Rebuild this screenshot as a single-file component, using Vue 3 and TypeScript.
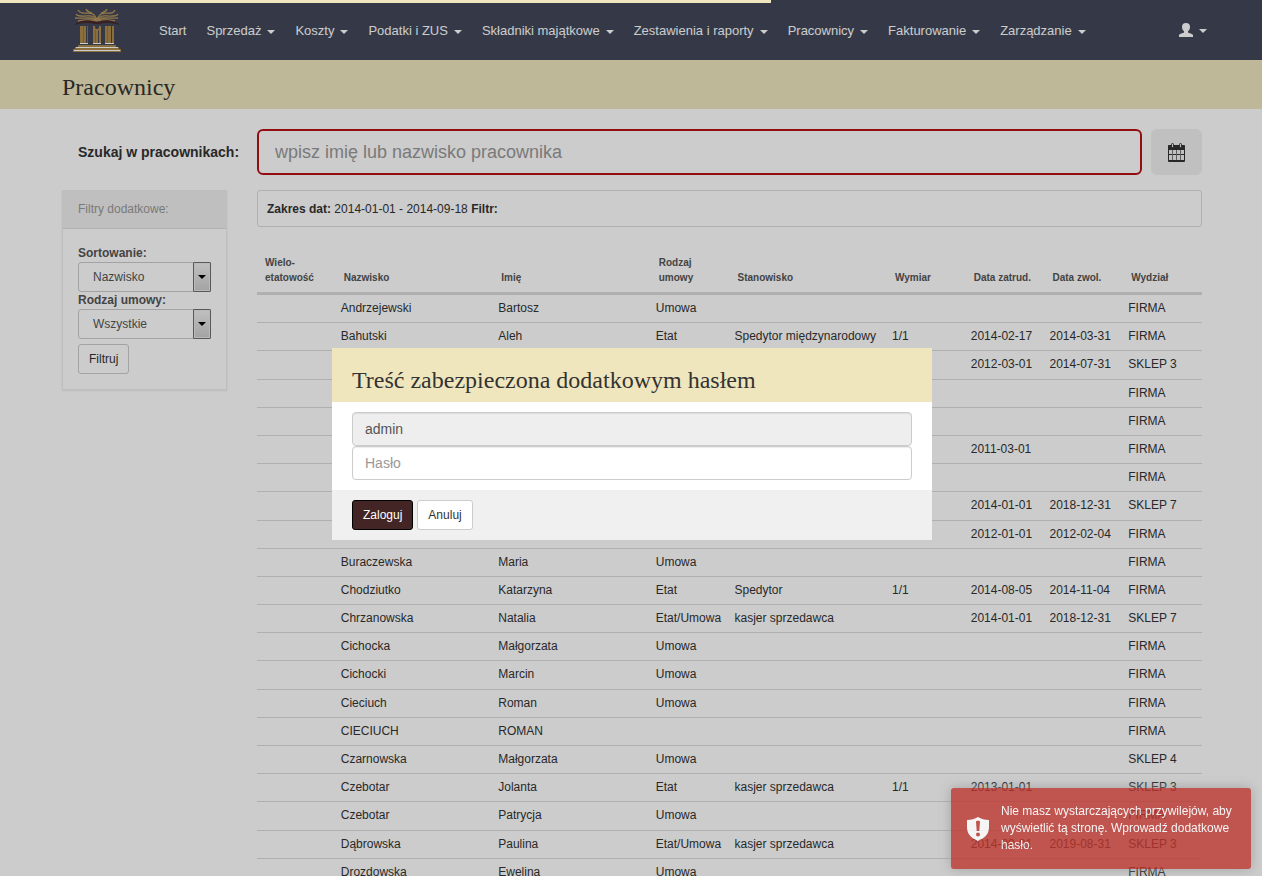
<script setup lang="ts">
import { ref } from 'vue'

interface NavItem {
  label: string
  menu: boolean
}

interface Employee {
  surname: string
  name: string
  contract: string
  position: string
  share: string
  hired: string
  released: string
  department: string
}

const navItems: NavItem[] = [
  { label: 'Start', menu: false },
  { label: 'Sprzedaż', menu: true },
  { label: 'Koszty', menu: true },
  { label: 'Podatki i ZUS', menu: true },
  { label: 'Składniki majątkowe', menu: true },
  { label: 'Zestawienia i raporty', menu: true },
  { label: 'Pracownicy', menu: true },
  { label: 'Fakturowanie', menu: true },
  { label: 'Zarządzanie', menu: true },
]

const progress = ref(61.1)
const query = ref('')
const sorting = ref('Nazwisko')
const contractType = ref('Wszystkie')
const login = ref('admin')
const password = ref('')

function row(
  surname: string,
  name: string,
  contract: string,
  position: string,
  share: string,
  hired: string,
  released: string,
  department: string,
): Employee {
  return { surname, name, contract, position, share, hired, released, department }
}

const employees: Employee[] = [
  row('Andrzejewski', 'Bartosz', 'Umowa', '', '', '', '', 'FIRMA'),
  row('Bahutski', 'Aleh', 'Etat', 'Spedytor międzynarodowy', '1/1', '2014-02-17', '2014-03-31', 'FIRMA'),
  row('', '', '', '', '', '2012-03-01', '2014-07-31', 'SKLEP 3'),
  row('', '', '', '', '', '', '', 'FIRMA'),
  row('', '', '', '', '', '', '', 'FIRMA'),
  row('', '', '', '', '', '2011-03-01', '', 'FIRMA'),
  row('', '', '', '', '', '', '', 'FIRMA'),
  row('', '', '', '', '', '2014-01-01', '2018-12-31', 'SKLEP 7'),
  row('', '', '', '', '', '2012-01-01', '2012-02-04', 'FIRMA'),
  row('Buraczewska', 'Maria', 'Umowa', '', '', '', '', 'FIRMA'),
  row('Chodziutko', 'Katarzyna', 'Etat', 'Spedytor', '1/1', '2014-08-05', '2014-11-04', 'FIRMA'),
  row('Chrzanowska', 'Natalia', 'Etat/Umowa', 'kasjer sprzedawca', '', '2014-01-01', '2018-12-31', 'SKLEP 7'),
  row('Cichocka', 'Małgorzata', 'Umowa', '', '', '', '', 'FIRMA'),
  row('Cichocki', 'Marcin', 'Umowa', '', '', '', '', 'FIRMA'),
  row('Cieciuch', 'Roman', 'Umowa', '', '', '', '', 'FIRMA'),
  row('CIECIUCH', 'ROMAN', '', '', '', '', '', 'FIRMA'),
  row('Czarnowska', 'Małgorzata', 'Umowa', '', '', '', '', 'SKLEP 4'),
  row('Czebotar', 'Jolanta', 'Etat', 'kasjer sprzedawca', '1/1', '2013-01-01', '', 'SKLEP 3'),
  row('Czebotar', 'Patrycja', 'Umowa', '', '', '', '', 'FIRMA'),
  row('Dąbrowska', 'Paulina', 'Etat/Umowa', 'kasjer sprzedawca', '', '2014-09-01', '2019-08-31', 'SKLEP 3'),
  row('Drozdowska', 'Ewelina', 'Umowa', '', '', '', '', 'FIRMA'),
]
</script>

<template>
  <div class="page">
    <header class="topbar">
      <div class="container topbar-inner">
        <a href="#" class="brand" aria-label="Strona główna">
          <svg width="50" height="44" viewBox="0 0 50 44" aria-hidden="true">
            <g fill="none" stroke="#b8975c" stroke-width="1.3">
              <path d="M25 12 C21 2 16 6 10 5 Q7 4 6 2" />
              <path d="M25 12 C20 5 15 9 9 8 Q5 8 4 6" />
              <path d="M25 13 C20 8 14 11 3 10" />
              <path d="M24 13 C18 11 12 12 6 13" />
              <path d="M20 5 C17 4 15 4 14 1" />
              <path d="M25 12 C29 2 34 6 40 5 Q42 4 43 2" />
              <path d="M25 12 C30 5 35 9 41 8 Q45 8 46 6" />
              <path d="M25 13 C30 8 36 11 46 10" />
              <path d="M26 13 C32 11 38 12 43 13" />
              <path d="M29 5 C32 4 34 4 35 1" />
            </g>
            <path d="M3 16 C11 11 19 12 24 14 H26 C31 12 39 11 47 16 V17 C39 14 31 15 27 16 H23 C19 15 11 14 3 17Z" fill="#49262a" />
            <g fill="#ad8a4c">
              <path d="M8 18h3v18H8z M12 18h2v18h-2z M21 18h2v18h-2z M24 21h2v15h-2z M27 18h2v18h-2z M33 18h2v18h-2z M36 18h3v18h-3z M40 18h2v18h-2z" />
              <path d="M21 18 L25 22 L29 18 V20 L26 23 H24 L21 20Z" />
              <path d="M6 37h38v2H6z M3 39h44v2H3z M1 41h48v3H1z" />
            </g>
            <g fill="#7d7672">
              <path d="M15 18h1v17h-1z M11 18h1v17h-1z M35 18h1v17h-1z M23 22h1v13h-1z" />
            </g>
            <path d="M8 35h8v1H8z M21 35h8v1h-8z M33 35h9v1h-9z M4 39h42v1H4z M2 42h46v1H2z" fill="#fff" />
          </svg>
        </a>
        <nav class="nav">
          <a v-for="item in navItems" :key="item.label" href="#" class="nav-link">
            {{ item.label }}<span v-if="item.menu" class="caret"></span>
          </a>
        </nav>
        <button type="button" class="user" aria-label="Konto">
          <svg width="14" height="14" viewBox="0 0 14 14" aria-hidden="true">
            <path
              d="M7 0 C9.800 0 11 1.500 11 4 C11 6 10.200 7.500 9 8.300 V9.500 C9.800 10.300 14 10.600 14 12.300 V14 H0 V12.300 C0 10.600 4.200 10.300 5 9.500 V8.300 C3.800 7.500 3 6 3 4 C3 1.500 4.200 0 7 0Z"
              fill="#fff"
            />
          </svg>
          <span class="caret"></span>
        </button>
      </div>
    </header>

    <div class="title-band">
      <div class="container">
        <h1>Pracownicy</h1>
      </div>
    </div>

    <main class="container">
      <div class="search-row">
        <label for="search">Szukaj w pracownikach:</label>
        <input id="search" v-model="query" type="text" placeholder="wpisz imię lub nazwisko pracownika" />
        <button type="button" class="calendar" aria-label="Zakres dat">
          <svg width="17" height="19" viewBox="0 0 17 19" aria-hidden="true">
            <rect x="0.500" y="2.500" width="16" height="15.500" rx="1" fill="none" stroke="#333" />
            <path d="M0 3q0-1 1-1h15q1 0 1 1v4H0z M0 17h17v1q0 1-1 1H1q-1 0-1-1z M0 11h17v1H0z" fill="#333" />
            <path d="M4.500 7v10M8.500 7v10M12.500 7v10" stroke="#777" fill="none" />
            <rect x="3.500" y="0.500" width="2" height="4" rx="1" fill="#eee" stroke="#333" />
            <rect x="11.500" y="0.500" width="2" height="4" rx="1" fill="#eee" stroke="#333" />
          </svg>
        </button>
      </div>

      <div class="columns">
        <aside class="panel">
          <h2>Filtry dodatkowe:</h2>
          <form class="filters" @submit.prevent>
            <label for="sorting">Sortowanie:</label>
            <div class="select">
              <select id="sorting" v-model="sorting">
                <option>Nazwisko</option>
              </select>
              <span class="select-arrow"></span>
            </div>
            <label for="contract">Rodzaj umowy:</label>
            <div class="select">
              <select id="contract" v-model="contractType">
                <option>Wszystkie</option>
              </select>
              <span class="select-arrow"></span>
            </div>
            <button type="submit" class="btn">Filtruj</button>
          </form>
        </aside>

        <section class="results">
          <p class="summary"><b>Zakres dat:</b> 2014-01-01 - 2014-09-18 <b>Filtr:</b></p>
          <table>
            <colgroup>
              <col class="narrow" />
              <col class="wide" />
              <col class="wide" />
              <col class="narrow" />
              <col class="wide" />
              <col class="narrow" />
              <col class="narrow" />
              <col class="narrow" />
              <col class="narrow" />
            </colgroup>
            <thead>
              <tr>
                <th>Wielo-<br />etatowość</th>
                <th>Nazwisko</th>
                <th>Imię</th>
                <th>Rodzaj<br />umowy</th>
                <th>Stanowisko</th>
                <th>Wymiar</th>
                <th>Data zatrud.</th>
                <th>Data zwol.</th>
                <th>Wydział</th>
              </tr>
            </thead>
            <tbody>
              <tr v-for="(e, i) in employees" :key="i">
                <td></td>
                <td>{{ e.surname }}</td>
                <td>{{ e.name }}</td>
                <td>{{ e.contract }}</td>
                <td>{{ e.position }}</td>
                <td>{{ e.share }}</td>
                <td>{{ e.hired }}</td>
                <td>{{ e.released }}</td>
                <td>{{ e.department }}</td>
              </tr>
            </tbody>
          </table>
        </section>
      </div>
    </main>

    <div class="overlay">
      <form class="modal" role="dialog" aria-labelledby="modal-title" @submit.prevent>
        <h2 id="modal-title">Treść zabezpieczona dodatkowym hasłem</h2>
        <div class="modal-body">
          <input v-model="login" type="text" readonly aria-label="Login" />
          <input v-model="password" type="password" placeholder="Hasło" aria-label="Hasło" />
        </div>
        <div class="modal-footer">
          <button type="submit" class="btn primary">Zaloguj</button>
          <button type="button" class="btn">Anuluj</button>
        </div>
      </form>
    </div>

    <div class="progress" :style="{ width: progress + '%' }"></div>

    <div class="toast" role="alert">
      <svg width="22" height="24" viewBox="0 0 22 24" aria-hidden="true">
        <path
          fill-rule="evenodd"
          d="M11 0 C8 2 4 3 0 3 V10 C0 17 4 21 11 24 C18 21 22 17 22 10 V3 C18 3 14 2 11 0Z M9 4.500 C9 3.500 13 3.500 13 4.500 L12.300 14 H9.700Z M11 15.500 A2 2 0 1 1 11 19.500 A2 2 0 1 1 11 15.500Z"
          fill="#fff"
        />
      </svg>
      <p>Nie masz wystarczających przywilejów, aby wyświetlić tą stronę. Wprowadź dodatkowe hasło.</p>
    </div>
  </div>
</template>

<style>
body {
  margin: 0;
}
</style>

<style scoped>
.page {
  height: 100vh;
  overflow: hidden;
  background: #fff;
  color: #333;
  font-family: "Liberation Sans", Arial, sans-serif;
  font-size: 13px;
}

.page *,
.page *::before {
  box-sizing: border-box;
}

input,
select,
button {
  font-family: inherit;
  font-size: 13px;
  margin: 0;
}

.container {
  max-width: 1262px;
  margin: 0 auto;
  padding: 0 60px 0 62px;
}

.topbar {
  background: #414759;
}

.topbar-inner {
  display: flex;
  align-items: center;
  height: 60px;
}

.brand {
  display: flex;
  margin: 0 27px 0 10px;
}

.nav {
  display: flex;
  flex: 1;
}

.nav-link {
  display: flex;
  align-items: center;
  padding: 2px 10px 0;
  line-height: 20px;
  color: #fff;
  text-decoration: none;
  white-space: nowrap;
}

.caret {
  border-top: 4px solid #fff;
  border-left: 4px solid transparent;
  border-right: 4px solid transparent;
  margin: 2px 0 0 6px;
}

.user {
  display: flex;
  align-items: center;
  padding: 0;
  margin-right: -5px;
  border: 0;
  background: none;
}

.title-band {
  background: #efe6be;
}

h1 {
  margin: 0;
  padding: 14px 0 9px;
  font: 24px/26px Georgia, "Liberation Serif", serif;
}

.search-row {
  display: flex;
  align-items: center;
  padding: 20px 0 15px;
}

.search-row label {
  width: 195px;
  padding-left: 16px;
  font-size: 14px;
  font-weight: bold;
  white-space: nowrap;
}

.search-row input {
  flex: 1;
  min-width: 0;
  height: 46px;
  padding: 1px 16px 0;
  border: 2px solid #b91116;
  border-radius: 6px;
  font-size: 18px;
  color: #555;
  background: #fff;
}

input::placeholder {
  color: #999;
  opacity: 1;
}

.calendar {
  display: flex;
  align-items: center;
  justify-content: center;
  width: 51px;
  height: 46px;
  margin-left: 9px;
  border: 0;
  border-radius: 6px;
  background: #f0f0f0;
}

.columns {
  display: flex;
  align-items: flex-start;
  gap: 30px;
}

.panel {
  width: 165px;
  flex: none;
  border: 1px solid #eee;
  box-shadow: 0 1px 2px rgba(0, 0, 0, 0.08);
}

.panel h2 {
  margin: 0;
  padding: 10px 15px;
  border-bottom: 1px solid #ddd;
  background: #efefef;
  color: #999;
  font-size: 12px;
  font-weight: normal;
  line-height: 17px;
}

.filters {
  padding: 16px 15px 15px;
}

.filters label {
  display: block;
  line-height: 17px;
  font-size: 12px;
  font-weight: bold;
  color: #555;
}

.select {
  position: relative;
  width: 133px;
  height: 30px;
}

.select select {
  appearance: none;
  width: 100%;
  height: 30px;
  padding: 0 20px 0 14px;
  border: 1px solid #ccc;
  border-radius: 3px;
  background: #fff;
  color: #555;
  font-size: 12px;
}

.select-arrow {
  position: absolute;
  top: 0;
  right: 0;
  display: flex;
  align-items: center;
  justify-content: center;
  width: 18px;
  height: 30px;
  border: 1px solid #707070;
  border-radius: 1px;
  background: linear-gradient(#f0f0f0, #ccc);
  box-shadow: inset 0 0 0 1px #e8e8e8;
  pointer-events: none;
}

.select-arrow::before {
  content: "";
  border-top: 4px solid #000;
  border-left: 4px solid transparent;
  border-right: 4px solid transparent;
}

.btn {
  height: 30px;
  padding: 0 10px;
  border: 1px solid #ccc;
  border-radius: 3px;
  background: #fff;
  color: #333;
  font-size: 12px;
}

.filters .btn {
  margin-top: 5px;
}

.btn.primary {
  border-color: #000;
  background: #432525;
  color: #fff;
}

.results {
  flex: 1;
  min-width: 0;
}

.summary {
  margin: 0;
  padding: 9px 9px 7px;
  border: 1px solid #ddd;
  border-radius: 3px;
  font-size: 12px;
  line-height: 19px;
}

table {
  width: 100%;
  margin-top: 20px;
  table-layout: fixed;
  border-collapse: separate;
  border-spacing: 0;
}

.narrow {
  width: 8.3333%;
}

.wide {
  width: 16.6667%;
}

th {
  padding: 8px 0 7px 8px;
  border-bottom: 3px solid #ddd;
  color: #555;
  font-size: 10px;
  line-height: 15px;
  text-align: left;
  vertical-align: bottom;
  white-space: nowrap;
}

td {
  height: 28px;
  padding: 4px 0 4px 5px;
  border-bottom: 1px solid #ddd;
  font-size: 12px;
  line-height: 1.6;
  white-space: nowrap;
}

.overlay {
  position: fixed;
  inset: 0;
  display: flex;
  align-items: center;
  justify-content: center;
  padding: 12px 0 0 2px;
  background: rgba(0, 0, 0, 0.2);
}

.modal {
  width: 600px;
  background: #fff;
}

.modal h2 {
  margin: 0;
  padding: 18px 20px 8px;
  background: #efe6be;
  font: 24px/28px Georgia, "Liberation Serif", serif;
}

.modal-body {
  display: flex;
  flex-direction: column;
  padding: 10px 20px;
}

.modal-body input {
  height: 34px;
  padding: 0 12px;
  border: 1px solid #ccc;
  border-radius: 4px;
  background: #fff;
  box-shadow: inset 0 1px 1px rgba(0, 0, 0, 0.08);
  color: #555;
  font-size: 14px;
}

.modal-body input[readonly] {
  background: #eee;
}

.modal-footer {
  display: flex;
  gap: 4px;
  padding: 10px 20px;
  background: #f0f0f0;
}

.progress {
  position: fixed;
  top: 0;
  left: 0;
  height: 3px;
  background: #efe6be;
}

.toast {
  position: fixed;
  right: 11px;
  bottom: 7px;
  display: flex;
  align-items: center;
  gap: 12px;
  width: 300px;
  padding: 15px 15px 15px 16px;
  border-radius: 3px;
  background: #bd362f;
  box-shadow: 0 0 12px #999;
  color: #fff;
  opacity: 0.8;
}

.toast svg {
  flex: none;
}

.toast p {
  margin: 0;
  line-height: 17px;
  font-size: 12px;
}
</style>
